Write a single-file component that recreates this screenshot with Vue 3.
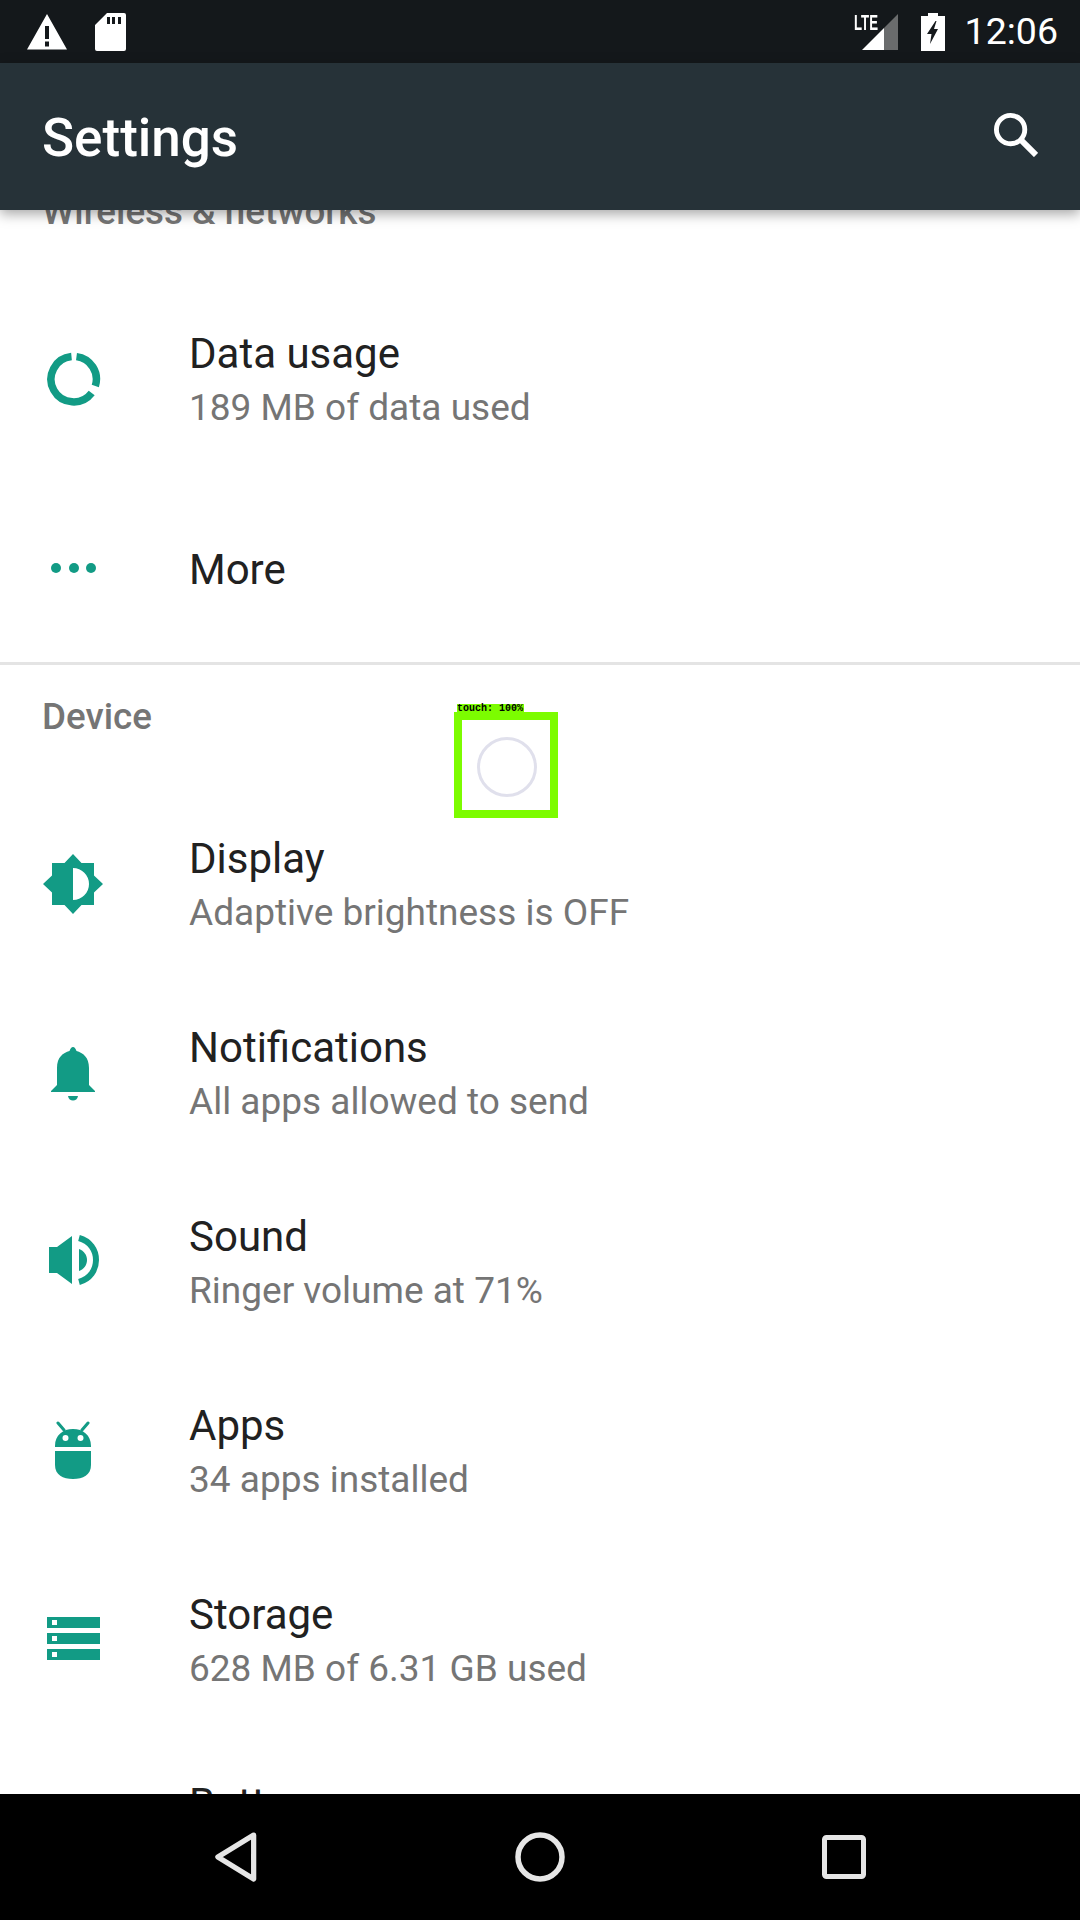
<script setup>
const wireless = [
  { id: "data", title: "Data usage", sub: "189 MB of data used" },
  { id: "more", title: "More" }
];
const device = [
  { id: "display", title: "Display", sub: "Adaptive brightness is OFF" },
  { id: "bell", title: "Notifications", sub: "All apps allowed to send" },
  { id: "sound", title: "Sound", sub: "Ringer volume at 71%" },
  { id: "apps", title: "Apps", sub: "34 apps installed" },
  { id: "storage", title: "Storage", sub: "628 MB of 6.31 GB used" },
  { id: "battery", title: "Battery", sub: "" }
];
</script>

<template>
  <div class="phone">
    <div class="status-bar">
      <div class="status-left">
        <svg class="ic-warn" viewBox="0 0 40 36"><path fill="#fff" fill-rule="evenodd" d="M20 0 40 35.500H0ZM18 12v13h4V12ZM18 27.500v5h4v-5Z"/></svg>
        <svg class="ic-sd" viewBox="0 0 31 38"><path fill="#fff" fill-rule="evenodd" d="M12 0h17a2 2 0 0 1 2 2v34a2 2 0 0 1-2 2H2a2 2 0 0 1-2-2V12ZM12 4v7h3V4ZM17 4v7h3V4ZM23 4v7h3V4Z"/></svg>
      </div>
      <div class="status-right">
        <div class="signal">
          <span class="lte">LTE</span>
          <svg class="ic-signal" viewBox="0 0 37 37"><path fill="#fff" d="M0 36 22 14v22Z"/><path fill="#6a6c6d" d="M22 14 36 0v36H22Z"/></svg>
        </div>
        <svg class="ic-battery" viewBox="0 0 24 38"><path fill="#fff" fill-rule="evenodd" d="M7 0h10v3h7v35H0V3h7ZM14.500 8 6 21h4.500L9 31l8-15h-4l2.500-8Z"/></svg>
        <span class="clock">12:06</span>
      </div>
    </div>

    <div class="toolbar">
      <h1>Settings</h1>
      <svg class="ic-search" viewBox="0 0 46 46"><circle cx="18" cy="18" r="14.500" fill="none" stroke="#fff" stroke-width="5"/><path d="M28.500 28.500 44 44" stroke="#fff" stroke-width="6" fill="none"/></svg>
    </div>

    <div class="list">
      <div class="list-inner">
        <section class="group has-divider">
          <div class="group-title">Wireless &amp; networks</div>
          <div v-for="row in wireless" :key="row.id" class="row">
            <div class="row-icon">
              <svg v-if="row.id === 'data'" viewBox="0 0 54 54" class="icon">
                <path fill="none" stroke="#129b85" stroke-width="7.500" d="M24.500 4.600A22.700 22.700 0 1 0 44.700 41"/>
                <path fill="none" stroke="#129b85" stroke-width="7.500" d="M29.500 4.600A22.700 22.700 0 0 1 48.300 34"/>
              </svg>
              <svg v-else viewBox="0 0 54 54" class="icon">
                <circle cx="9" cy="27" r="5" fill="#129b85"/><circle cx="27" cy="27" r="5" fill="#129b85"/><circle cx="44" cy="27" r="5" fill="#129b85"/>
              </svg>
            </div>
            <div class="row-text">
              <div class="row-title">{{ row.title }}</div>
              <div v-if="row.sub" class="row-sub">{{ row.sub }}</div>
            </div>
          </div>
        </section>

        <section class="group">
          <div class="group-title">Device</div>
          <div v-for="row in device" :key="row.id" class="row">
            <div class="row-icon">
              <svg v-if="row.id === 'display'" viewBox="0 0 60 60" class="icon-lg">
                <path fill="#129b85" fill-rule="evenodd" d="M30 0 38.500 9H51V21.500L60 30 51 38.500V51H38.500L30 60 21.500 51H9V38.500L0 30 9 21.500V9H21.500ZM30 14V46A16 16 0 0 0 30 14Z"/>
              </svg>
              <svg v-else-if="row.id === 'bell'" viewBox="0 0 60 60" class="icon-lg">
                <path fill="#129b85" d="M30 4c1.500 0 2.500 1.500 3.500 4C40 10 46 14 46 25v17l6 6v1H8v-1l6-6V25C14 14 20 10 26.500 8 27.500 5.500 28.500 4 30 4Z"/>
                <path fill="#129b85" d="M25 53h10c-.5 3-2.500 4.500-5 4.500S25.500 56 25 53Z"/>
              </svg>
              <svg v-else-if="row.id === 'sound'" viewBox="0 0 60 60" class="icon-lg">
                <path fill="#129b85" d="M6 15H14L29 4V52L14 41H6Z"/>
                <path fill="#129b85" d="M36 17c5 2 8 6 8 11s-3 9-8 11Z"/>
                <path fill="none" stroke="#129b85" stroke-width="6" d="M36 6c11 3 17 12 17 22s-6 19-17 22"/>
              </svg>
              <svg v-else-if="row.id === 'apps'" viewBox="0 0 60 60" class="icon-lg">
                <path fill="#129b85" fill-rule="evenodd" d="M12 25C12 14 20 8 30 8s18 6 18 17v1H12ZM22.500 14a3 3 0 1 0 0 6 3 3 0 0 0 0-6ZM37.500 14a3 3 0 1 0 0 6 3 3 0 0 0 0-6Z"/>
                <path fill="#129b85" d="M12 30h36v14c0 10-8 14-18 14S12 54 12 44Z"/>
                <path stroke="#129b85" stroke-width="3" stroke-linecap="round" d="M15 2l6 7M45 2l-6 7"/>
              </svg>
              <svg v-else-if="row.id === 'storage'" viewBox="0 0 60 60" class="icon-lg">
                <path fill="#129b85" fill-rule="evenodd" d="M4 7h53v11H4ZM9 10v5h5v-5ZM4 23h53v11H4ZM9 26v5h5v-5ZM4 39h53v11H4ZM9 42v5h5v-5Z"/>
              </svg>
            </div>
            <div class="row-text">
              <div class="row-title">{{ row.title }}</div>
              <div v-if="row.sub !== undefined" class="row-sub">{{ row.sub }}</div>
            </div>
          </div>
        </section>
      </div>

      <!-- touch debug marker drawn over the list -->
      <div class="touch-box">
        <span class="touch-label">touch: 100%</span>
        <div class="touch-ring"></div>
      </div>
    </div>

    <div class="nav-bar">
      <svg class="nav-back" viewBox="0 0 44 52"><path d="M40.500 3 3 26 40.500 49Z" fill="none" stroke="#e6e6e6" stroke-width="5.500" stroke-linejoin="round"/></svg>
      <svg class="nav-home" viewBox="0 0 50 50"><circle cx="25" cy="25" r="22" fill="none" stroke="#e6e6e6" stroke-width="5.500"/></svg>
      <svg class="nav-recent" viewBox="0 0 44 44"><rect x="2.500" y="2.500" width="39" height="39" rx="2" fill="none" stroke="#e6e6e6" stroke-width="5"/></svg>
    </div>
  </div>
</template>

<style>
html,
body {
  margin: 0;
  background: #000;
}
</style>

<style scoped>
.phone {
  width: 1080px;
  height: 1920px;
  display: flex;
  flex-direction: column;
  overflow: hidden;
  background: #fff;
  font-family: Roboto, "Liberation Sans", sans-serif;
}

/* status bar */
.status-bar {
  height: 63px;
  flex-shrink: 0;
  background: #14181b;
  display: flex;
  justify-content: space-between;
  align-items: center;
  padding: 0 22px 0 27px;
  color: #fff;
}
.status-left {
  display: flex;
  align-items: center;
  gap: 28px;
}
.ic-warn {
  width: 40px;
  height: 36px;
}
.ic-sd {
  width: 31px;
  height: 38px;
}
.status-right {
  display: flex;
  align-items: center;
}
.signal {
  position: relative;
  width: 45px;
  height: 38px;
}
.lte {
  position: absolute;
  left: 0;
  top: -1px;
  font-family: "Liberation Sans", sans-serif;
  font-size: 22px;
  line-height: 22px;
  font-weight: 700;
  transform: scaleX(0.6);
  transform-origin: left top;
}
.ic-signal {
  position: absolute;
  right: 0;
  bottom: 0;
  width: 37px;
  height: 37px;
}
.ic-battery {
  width: 24px;
  height: 38px;
  margin-left: 22px;
  margin-right: 20px;
}
.clock {
  font-size: 37.500px;
  line-height: 63px;
}

/* toolbar */
.toolbar {
  height: 147px;
  flex-shrink: 0;
  background: #263238;
  display: flex;
  justify-content: space-between;
  align-items: center;
  padding: 0 42px 0 42px;
  box-shadow: 0 4px 12px rgba(0, 0, 0, 0.35);
  position: relative;
  z-index: 2;
}
.toolbar h1 {
  margin: 0;
  padding-top: 2px;
  font-size: 53px;
  font-weight: 500;
  color: #fff;
}
.ic-search {
  width: 45px;
  height: 45px;
  margin-bottom: 4px;
}

/* list */
.list {
  flex: 1;
  position: relative;
  overflow: hidden;
}
.list-inner {
  margin-top: -49px;
}
.group-title {
  height: 125px;
  box-sizing: border-box;
  padding: 31px 0 0 42px;
  font-size: 36.750px;
  line-height: 40px;
  font-weight: 500;
  color: #757575;
}
.has-divider {
  border-bottom: 3px solid #e4e4e4;
  margin-bottom: 1px;
}
.has-divider .row:last-child {
  margin-bottom: -2px;
}
.row {
  height: 189px;
  display: flex;
  align-items: center;
}
.row-icon {
  width: 147px;
  margin-left: 43px;
  margin-top: -3px;
  flex-shrink: 0;
  display: flex;
}
.icon {
  width: 54px;
  height: 54px;
  margin-left: 4px;
}
.icon-lg {
  width: 60px;
  height: 60px;
}
.row-text {
  display: flex;
  flex-direction: column;
  gap: 6px;
  margin-left: -1px;
}
.row-title {
  font-size: 42px;
  line-height: 48px;
  color: #212121;
}
.row-sub {
  font-size: 37px;
  line-height: 48px;
  min-height: 48px;
  color: #757575;
}

/* touch marker */
.touch-box {
  position: absolute;
  left: 454px;
  top: 502px;
  width: 104px;
  height: 106px;
  box-sizing: border-box;
  border: 8px solid #7cfc00;
  display: flex;
  align-items: center;
  justify-content: center;
}
.touch-label {
  position: absolute;
  left: -5px;
  top: -16px;
  height: 10px;
  width: 67px;
  background: #7cfc00;
  color: #000;
  font-family: "Liberation Mono", monospace;
  font-size: 10px;
  font-weight: 700;
  line-height: 10px;
  white-space: nowrap;
}
.touch-ring {
  width: 60px;
  height: 60px;
  margin: 4px 0 0 2px;
  flex-shrink: 0;
  border-radius: 50%;
  border: 3px solid #e0e0ec;
  box-sizing: border-box;
  filter: blur(0.6px);
}

/* nav bar */
.nav-bar {
  height: 126px;
  flex-shrink: 0;
  background: #000;
  position: relative;
  z-index: 2;
  display: flex;
  align-items: center;
  padding-left: 215px;
}
.nav-back {
  width: 42px;
  height: 50px;
}
.nav-home {
  width: 50px;
  height: 50px;
  margin-left: 258px;
}
.nav-recent {
  width: 44px;
  height: 44px;
  margin-left: 257px;
}
</style>
